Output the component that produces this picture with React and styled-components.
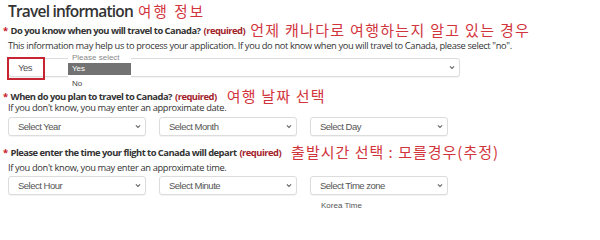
import React from 'react';
import styled, { createGlobalStyle } from 'styled-components';

const GlobalStyle = createGlobalStyle`
  body {
    margin: 0;
    background: #fff;
    font-family: "Open Sans", "Noto Sans CJK KR", sans-serif;
    color: #333;
  }
`;

const Page = styled.div`
  width: 600px;
  height: 219px;
  overflow: hidden;
  padding-left: 8px;
  box-sizing: border-box;
`;

const Heading = styled.div`
  display: flex;
  align-items: baseline;
  gap: 5px;
  height: 22px;
`;

const Title = styled.h2`
  margin: 0;
  font-size: 15.5px;
  font-weight: 600;
  letter-spacing: -0.8px;
  color: #333;
  line-height: 22px;
`;

const Note = styled.span`
  font-family: "Noto Sans CJK KR", sans-serif;
  font-size: ${({ $size }) => $size || 15}px;
  letter-spacing: ${({ $ls }) => $ls || 0}px;
  color: #d2343c;
  line-height: 18px;
  margin-left: ${({ $gap }) => $gap || 0}px;
`;

const Section = styled.div`
  display: flex;
  flex-direction: column;
  margin-top: ${({ $mt }) => $mt || 0}px;
`;

const LabelRow = styled.div`
  display: flex;
  align-items: center;
  height: 14px;
  margin-left: -5px;
  white-space: nowrap;
`;

const Label = styled.span`
  font-size: 9.4px;
  font-weight: 700;
  letter-spacing: -0.52px;
  color: #333;
`;

const Star = styled.span`
  color: #c8202a;
  margin-right: 3px;
`;

const Required = styled.span`
  font-size: 9.4px;
  font-weight: 700;
  letter-spacing: -0.52px;
  color: #a3232b;
  margin-left: 3px;
`;

const Help = styled.div`
  font-size: 9.3px;
  letter-spacing: -0.36px;
  color: #333;
  line-height: 10px;
  margin-top: ${({ $mt }) => $mt || 0}px;
  height: ${({ $h }) => $h}px;
  white-space: nowrap;
`;

const Row = styled.div`
  display: flex;
  gap: 13px;
`;

const SelectBox = styled.div`
  position: relative;
  display: flex;
  align-items: center;
  justify-content: space-between;
  width: ${({ $w }) => $w}px;
  height: 19px;
  box-sizing: border-box;
  border: 1px solid #dcdcdc;
  border-radius: 3px;
  background: #fff;
  padding: 0 4px 0 9px;
  font-family: "Liberation Sans", Arial, sans-serif;
  font-size: 9.5px;
  letter-spacing: -0.5px;
  color: #555;
  box-shadow: 0 1px 1px rgba(0, 0, 0, 0.05);
`;

const Chevron = styled.svg`
  width: 6px;
  height: 5px;
  flex-shrink: 0;
`;

const Marked = styled.div`
  position: absolute;
  left: -2px;
  top: -2px;
  width: 38px;
  height: 23px;
  box-sizing: border-box;
  border: 2px solid #c62430;
`;

const OpenList = styled.div`
  position: absolute;
  left: 59px;
  top: -6px;
  width: 63px;
  background: #fff;
  font-family: "Liberation Sans", Arial, sans-serif;
  font-size: 8px;
  letter-spacing: 0;
`;

const ListItem = styled.div`
  height: ${({ $h }) => $h}px;
  line-height: ${({ $h }) => $h}px;
  padding-left: 4px;
  color: ${({ $active, $muted }) => ($active ? '#fff' : $muted ? '#888' : '#444')};
  background: ${({ $active }) => ($active ? '#727272' : 'transparent')};
`;

const Caption = styled.div`
  font-family: "Liberation Sans", Arial, sans-serif;
  font-size: 8px;
  line-height: 10px;
  color: #555;
  margin: 6px 0 0 313px;
`;

const Drop = ({ width, value, children }) => (
  <SelectBox $w={width} role="combobox">
    <span>{value}</span>
    <Chevron viewBox="0 0 6 5">
      <path d="M0.9 1.3 L3 3.5 L5.1 1.3" fill="none" stroke="#666" strokeWidth="1.1" />
    </Chevron>
    {children}
  </SelectBox>
);

export default function App() {
  return (
    <Page>
      <GlobalStyle />
      <Heading>
        <Title>Travel information</Title>
        <Note $size={14.5} $ls={2.1}>여행 정보</Note>
      </Heading>

      <Section $mt={1}>
        <LabelRow>
          <Label><Star>*</Star>Do you know when you will travel to Canada?</Label>
          <Required>(required)</Required>
          <Note $gap={5} $ls={1.3}>언제 캐나다로 여행하는지 알고 있는 경우</Note>
        </LabelRow>
        <Help $mt={4} $h={17}>
          This information may help us to process your application. If you do not know when you will travel to Canada, please select "no".
        </Help>
        <Row>
          <Drop width={452} value="Yes">
            <Marked />
            <OpenList>
              <ListItem $h={10} $muted>Please select</ListItem>
              <ListItem $h={12} $active>Yes</ListItem>
              <ListItem $h={18}>No</ListItem>
            </OpenList>
          </Drop>
        </Row>
      </Section>

      <Section $mt={12}>
        <LabelRow>
          <Label><Star>*</Star>When do you plan to travel to Canada?</Label>
          <Required>(required)</Required>
          <Note $gap={10} $ls={1.2}>여행 날짜 선택</Note>
        </LabelRow>
        <Help $h={14}>If you don't know, you may enter an approximate date.</Help>
        <Row>
          <Drop width={138} value="Select Year" />
          <Drop width={138} value="Select Month" />
          <Drop width={138} value="Select Day" />
        </Row>
      </Section>

      <Section $mt={9}>
        <LabelRow>
          <Label><Star>*</Star>Please enter the time your flight to Canada will depart</Label>
          <Required>(required)</Required>
          <Note $gap={10} $ls={1}>출발시간 선택 : 모를경우(추정)</Note>
        </LabelRow>
        <Help $mt={4} $h={13}>If you don't know, you may enter an approximate time.</Help>
        <Row>
          <Drop width={138} value="Select Hour" />
          <Drop width={138} value="Select Minute" />
          <Drop width={138} value="Select Time zone" />
        </Row>
        <Caption>Korea Time</Caption>
      </Section>
    </Page>
  );
}
